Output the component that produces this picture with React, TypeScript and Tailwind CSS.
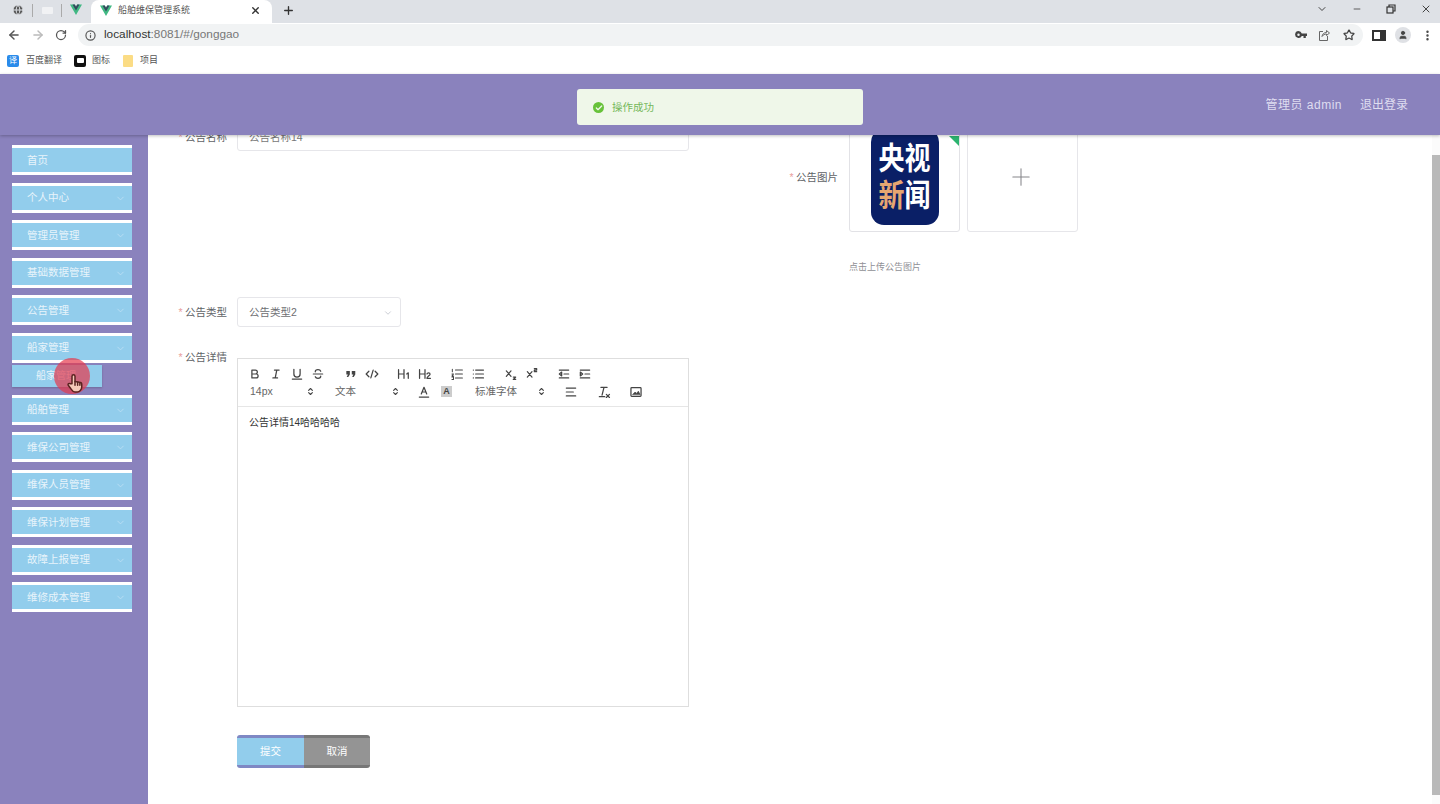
import type { ReactNode } from 'react'
import { ArrowLeft, ArrowRight, Check, ChevronDown, ChevronsUpDown, Info, MoreVertical, Plus, RotateCw, Star, User, X, Minus, Globe } from 'lucide-react'

const cjk = "font-['Liberation_Sans','Noto_Sans_CJK_SC',sans-serif]"

const menus = [
  { name: '首页' },
  { name: '个人中心', arrow: true },
  { name: '管理员管理', arrow: true },
  { name: '基础数据管理', arrow: true },
  { name: '公告管理', arrow: true },
  { name: '船家管理', arrow: true, sub: '船家管理' },
  { name: '船舶管理', arrow: true },
  { name: '维保公司管理', arrow: true },
  { name: '维保人员管理', arrow: true },
  { name: '维保计划管理', arrow: true },
  { name: '故障上报管理', arrow: true },
  { name: '维修成本管理', arrow: true },
]

function VueMark({ size = 12 }: { size?: number }) {
  return (
    <svg width={size} height={size} viewBox="0 0 24 22">
      <path d="M0 0h9.5L12 4.5 14.500 0H24L12 21z" fill="#41b883" />
      <path d="M5 0h4.500L12 4.500 14.500 0H19l-7 12z" fill="#35495e" />
    </svg>
  )
}

function Q({ children, className = '' }: { children: ReactNode; className?: string }) {
  return (
    <svg viewBox="0 0 18 18" className={`size-[14px] ${className}`} fill="none" stroke="#444" strokeWidth="1.600" strokeLinecap="round" strokeLinejoin="round">
      {children}
    </svg>
  )
}

function TBtn({ children }: { children: ReactNode }) {
  return <span className="flex h-[18px] w-[21px] items-center justify-center">{children}</span>
}

function Picker({ label, width }: { label: string; width: string }) {
  return (
    <span className={`flex h-[18px] items-center justify-between pl-[6px] text-[10.500px] text-[#666] ${width}`}>
      {label}
      <ChevronsUpDown className="size-[9px] text-[#444]" strokeWidth={3} />
    </span>
  )
}

function EditorToolbar() {
  return (
    <div className="flex h-[48px] flex-col justify-center border-b border-[#e6e6e6] pl-[6px]">
      <div className="flex h-[18px] items-center">
        <div className="mr-[12px] flex">
          <TBtn><Q><path d="M5 4h4.500a2.500 2.500 0 0 1 0 5H5zM5 9h5.500a2.500 2.500 0 0 1 0 5H5z" /></Q></TBtn>
          <TBtn><Q><path d="M7 4h6M5 14h6M8 14l2-10" /></Q></TBtn>
          <TBtn><Q><path d="M5 3v6a4 4 0 0 0 8 0V3M3 15.500h12" /></Q></TBtn>
          <TBtn><Q><path d="M3 9h12M12.500 5.500C12 4 10.500 3.500 9 3.500c-2 0-3.500 1-3.500 2.700M5.500 12.500c.5 1.500 2 2 3.500 2 2 0 3.500-1 3.500-2.700" /></Q></TBtn>
        </div>
        <div className="mr-[11px] flex">
          <TBtn>
            <svg viewBox="0 0 18 18" className="size-[14px]" fill="#444">
              <path d="M3 5h4.500v4.500L5.500 13H3.500l1.500-3.500H3zM10 5h4.500v4.500L12.500 13h-2l1.500-3.500h-2z" />
            </svg>
          </TBtn>
          <TBtn><Q><path d="M5 5.500 1.500 9 5 12.500M13 5.500 16.500 9 13 12.500M10.500 4l-3 10" /></Q></TBtn>
        </div>
        <div className="mr-[11px] flex">
          <TBtn><Q><path d="M2 3.500v11M9 3.500v11M2 9h7M12.500 9 14.500 7.500v7" /></Q></TBtn>
          <TBtn><Q><path d="M2 3.500v11M9 3.500v11M2 9h7M11.500 9c.5-2 4-2 4 .3 0 1.700-4 3.200-4 5.200h4.500" /></Q></TBtn>
        </div>
        <div className="mr-[12px] flex">
          <TBtn><Q><path d="M7 4h9M7 9h9M7 14h9M3 3v3M2.500 9h2l-2 2.500h2M2.500 13h2v3h-2" strokeWidth="1.300" /></Q></TBtn>
          <TBtn><Q><path d="M6 4h10M6 9h10M6 14h10M3 4h.1M3 9h.1M3 14h.1" /></Q></TBtn>
        </div>
        <div className="mr-[11px] flex">
          <TBtn><Q><path d="M3 5l6 7M9 5l-6 7M12 13h3l-3 3h3" /></Q></TBtn>
          <TBtn><Q><path d="M3 6l6 7M9 6l-6 7M12 2h3v2h-3v2h3" /></Q></TBtn>
        </div>
        <div className="flex">
          <TBtn><Q><path d="M3 4h12M3 14h12M9 9h6M6 6.500 3 9l3 2.500z" /></Q></TBtn>
          <TBtn><Q><path d="M3 4h12M3 14h12M9 9h6M3 6.500 6 9l-3 2.500z" /></Q></TBtn>
        </div>
      </div>
      <div className="flex h-[18px] items-center">
        <Picker label="14px" width="w-[71px]" />
        <span className="w-[14px]" />
        <Picker label="文本" width="w-[71px]" />
        <span className="w-[13px]" />
        <TBtn><Q><path d="M5.500 11.500 9 3l3.500 8.500M6.500 9h5M3 15.500h12" /></Q></TBtn>
        <span className="w-[2px]" />
        <TBtn>
          <span className="flex size-[11px] items-center justify-center bg-[#ccc] text-[9px] font-bold leading-none text-[#444]">A</span>
        </TBtn>
        <span className="w-[12px]" />
        <Picker label="标准字体" width="w-[77px]" />
        <span className="w-[14px]" />
        <TBtn><Q><path d="M3 4h12M3 9h9M3 14h12" /></Q></TBtn>
        <span className="w-[12px]" />
        <TBtn><Q><path d="M5 3h8M9 3l-2.500 10M3 15h7M12 12l4 4M16 12l-4 4" /></Q></TBtn>
        <span className="w-[11px]" />
        <TBtn><Q><rect x="2.500" y="3.500" width="13" height="11" rx="1" /><path d="M5 12l3-3 2 2 2-3 2 4z" fill="#444" strokeWidth="1" /></Q></TBtn>
      </div>
    </div>
  )
}

function FieldLabel({ text, className = '' }: { text: string; className?: string }) {
  return (
    <span className={`pr-px text-right text-[10.500px] leading-[16px] text-[#606266] ${className}`}>
      <span className="mr-[2.500px] text-[#e9a0a0]">*</span>
      {text}
    </span>
  )
}

function LogoCard() {
  return (
    <div className="relative flex size-[111px] items-center justify-center overflow-hidden rounded-[3px] border border-[#e2e2e6] bg-white">
      <div className="grid h-[96px] w-[68px] grid-cols-2 content-center justify-items-center rounded-[13px] bg-[#0a1f66] px-[8px] text-[26px] font-bold leading-[37px] text-white">
        <span className="scale-y-[1.2]">央</span>
        <span className="scale-y-[1.2]">视</span>
        <span className="scale-y-[1.2] text-[#e6a671]">新</span>
        <span className="scale-y-[1.2]">闻</span>
      </div>
      <svg className="absolute right-0 top-[14px]" width="10" height="10"><path d="M0 0h10v10z" fill="#2cb36f" /></svg>
    </div>
  )
}

export default function App() {
  return (
    <div className={`relative flex h-[804px] w-[1440px] flex-col overflow-hidden bg-white ${cjk}`}>
      {/* browser tabs */}
      <div className="flex h-[23px] items-center bg-[#dee1e6]">
        <div className="flex h-full w-[91px] items-center pb-[3px] pl-[12px]">
          <Globe className="size-[12px] fill-[#555] text-[#dee1e6]" strokeWidth={2} />
          <span className="ml-[8px] h-[13px] w-px bg-[#aaa]" />
          <span className="ml-[9px] h-[7px] w-[11px] rounded-[1px] bg-[#f1f2f4]" />
          <span className="ml-[8px] h-[13px] w-px bg-[#aaa]" />
          <span className="ml-[8px]"><VueMark /></span>
        </div>
        <div className="flex h-full w-[181px] items-center rounded-t-[8px] bg-white pb-[2px] pl-[9px] pr-[11px]">
          <VueMark />
          <span className="ml-[6px] flex-1 text-[9px] text-[#555]">船舶维保管理系统</span>
          <X className="size-[11px] text-[#333]" strokeWidth={3} />
        </div>
        <Plus className="mb-[3px] ml-[10px] size-[13px] text-[#333]" strokeWidth={2.500} />
        <div className="mb-[6px] ml-auto flex items-center gap-[24px] pr-[8px] text-[#444]">
          <ChevronDown className="size-[12px]" />
          <Minus className="size-[10px]" />
          <svg width="10" height="10" viewBox="0 0 10 10" fill="none" stroke="#333" strokeWidth="1.200"><rect x="1" y="3" width="6" height="6" /><path d="M3 3V1h6v6H7" /></svg>
          <X className="size-[12px]" />
        </div>
      </div>
      {/* address bar */}
      <div className="flex h-[24px] items-center bg-white pl-[7px] pr-[6.500px]">
        <ArrowLeft className="size-[14px] text-[#555]" strokeWidth={2.500} />
        <ArrowRight className="ml-[10px] size-[14px] text-[#bbb]" strokeWidth={2.500} />
        <RotateCw className="ml-[10px] size-[12px] text-[#555]" strokeWidth={2.500} />
        <div className="ml-[11px] flex h-[22px] flex-1 items-center rounded-full bg-[#f1f3f4] pl-[7px] pr-[8px]">
          <Info className="size-[11px] text-[#555]" strokeWidth={2.500} />
          <span className="ml-[8px] text-[11.800px] text-[#777]"><span className="text-[#333]">localhost</span>:8081/#/gonggao</span>
          <svg className="ml-auto" width="12" height="8" viewBox="0 0 12 8" fill="#444">
            <path d="M3.500 0a3.500 3.500 0 0 1 3.300 2.500H12v2.500h-1.200v2H8.500V5H6.800A3.500 3.500 0 1 1 3.500 0zm0 2.500a1.200 1.200 0 1 0 0 2.500 1.200 1.200 0 0 0 0-2.500z" />
          </svg>
          <svg className="ml-[11px]" width="12" height="12" viewBox="0 0 12 12" fill="none" stroke="#666" strokeWidth="1">
            <path d="M5 2.500H1.500v9h8V7M4 7.500c.3-2.500 2-4 4.500-4V1.500L11.500 4 8.500 6.500V5C6.500 5 5 6 4 7.500z" />
          </svg>
          <Star className="ml-[13px] size-[12px] text-[#444]" strokeWidth={2.500} />
        </div>
        <span className="ml-[9px] h-[11px] w-[14px] border-2 border-r-[6px] border-[#333]" />
        <span className="ml-[9px] flex size-[16px] items-center justify-center rounded-full bg-[#dfe1e5]">
          <User className="size-[10px] fill-[#444] text-[#444]" />
        </span>
        <MoreVertical className="ml-[10px] size-[13px] text-[#444]" strokeWidth={2.500} />
      </div>
      {/* bookmarks */}
      <div className="flex h-[27px] items-center bg-white pl-[7px] text-[9px] text-[#555]">
        <span className="flex size-[12px] items-center justify-center rounded-[2px] bg-[#2a8bea] text-[8px] text-white">译</span>
        <span className="ml-[7px]">百度翻译</span>
        <span className="ml-[12px] flex size-[12px] items-center justify-center rounded-[2px] bg-[#111]"><span className="h-[5px] w-[7px] rounded-[1px] bg-white" /></span>
        <span className="ml-[6px]">图标</span>
        <span className="ml-[13px] h-[12px] w-[10px] rounded-[1px] bg-[#fbdc85]" />
        <span className="ml-[7px]">项目</span>
      </div>

      {/* app header */}
      <header className="relative z-10 flex h-[61px] items-center justify-end gap-[18px] bg-[#8a82bd] pr-[32px] text-[12px] text-[#dfddf0] shadow-[0_1px_3px_rgba(0,0,0,0.25)]">
        <span className="tracking-[0.5px]">管理员 admin</span>
        <span>退出登录</span>
      </header>

      <div className="flex min-h-0 flex-1">
        {/* sidebar */}
        <aside className="flex w-[148px] shrink-0 flex-col bg-[#8a82bd] pl-[12px] pt-[10px]">
          {menus.map(m => (
            <div key={m.name} className="mb-[7.500px]">
              <div className="flex h-[30px] w-[120px] items-center justify-between border-y-[3px] border-white bg-[#92cdec] pl-[15px] pr-[6px] pt-[1px] text-[10.500px] text-[#e8f4fb]">
                <span>{m.name}</span>
                {m.arrow && <ChevronDown className="size-[11px] text-[#b9def3]" />}
              </div>
              {m.sub && (
                <div className="mb-[0.500px] mt-[2px] flex h-[22px] w-[90px] items-center bg-[#92cdec] pl-[24px] text-[10px] text-[#e8f4fb] shadow-[0_1px_2px_rgba(0,0,0,0.2)]">
                  {m.sub}
                </div>
              )}
            </div>
          ))}
        </aside>

        {/* form */}
        <main className="min-w-0 flex-1 overflow-hidden">
          <div className="-mt-[14px]">
            <div className="flex h-[176px]">
              <div className="flex w-[620px]">
                <FieldLabel text="公告名称" className="mt-[8px] w-[80px]" />
                <div className="ml-[9px] h-[30px] w-[452px] rounded-[3px] border border-[#e6e6ea] pl-[11px] pt-[1px] text-[10.500px] leading-[28px] text-[#777]">公告名称14</div>
              </div>
              <FieldLabel text="公告图片" className="mt-[48px] w-[71px]" />
              <div className="ml-[10px]">
                <div className="flex gap-[7px]">
                  <LogoCard />
                  <div className="flex size-[111px] items-center justify-center rounded-[3px] border border-[#e6e6ea] pr-[3px]">
                    <Plus className="size-[28px] text-[#85858a]" strokeWidth={0.900} />
                  </div>
                </div>
                <p className="mt-[28px] text-[9px] leading-[14px] text-[#8f8f95]">点击上传公告图片</p>
              </div>
            </div>
            <div className="flex">
              <FieldLabel text="公告类型" className="mt-[7px] w-[80px]" />
              <div className="ml-[9px] flex h-[30px] w-[164px] items-center justify-between rounded-[3px] border border-[#e6e6ea] pl-[11px] pr-[7px] pt-[1px] text-[10.500px] text-[#6e6e72]">
                公告类型2
                <ChevronDown className="size-[10px] text-[#c0c4cc]" />
              </div>
            </div>
            <div className="mt-[31px] flex">
              <FieldLabel text="公告详情" className="mt-[-9px] w-[80px]" />
              <div className="ml-[9px] h-[349px] w-[452px] border border-[#dedede]">
                <EditorToolbar />
                <p className="pl-[11px] pt-[9px] text-[10px] leading-[14px] text-[#333]">公告详情14哈哈哈哈</p>
              </div>
            </div>
            <div className="ml-[89px] mt-[28px] flex text-[10.500px] text-white">
              <button className="flex h-[33px] w-[67px] items-center justify-center rounded-l-[3px] border-y-[3px] border-[#7f88c4] bg-[#92cdec]">提交</button>
              <button className="flex h-[33px] w-[66px] items-center justify-center rounded-r-[3px] border-y-[3px] border-[#777] bg-[#949494]">取消</button>
            </div>
          </div>
        </main>

        {/* page scrollbar */}
        <div className="flex w-[8px] shrink-0 flex-col bg-[#fbfbfb] pb-[9px] pt-[20px]">
          <div className="flex-1 bg-[#b9b9b9]" />
        </div>
      </div>

      {/* toast */}
      <div className="absolute left-[577px] top-[89px] z-20 flex h-[36px] w-[286px] items-center rounded-[3px] bg-[#eff7e9] pl-[16px] pt-[1px] text-[10.500px] text-[#75b85a]">
        <span className="flex size-[11px] items-center justify-center rounded-full bg-[#67c23a]">
          <Check className="size-[8px] text-[#eff7e9]" strokeWidth={4} />
        </span>
        <span className="ml-[8px]">操作成功</span>
      </div>

      {/* recorded mouse pointer */}
      <div className="absolute left-[54px] top-[358px] z-20 size-[36px] rounded-full bg-[#e5394d]/70" />
      <svg className="absolute left-[66px] top-[373px] z-30" width="18" height="20" viewBox="0 0 24 26" fill="#f6c9b8" stroke="#5a2320" strokeWidth="2" strokeLinejoin="round" strokeLinecap="round">
        <path d="M8 14V4a2 2 0 0 1 4 0v7l6 1a3 3 0 0 1 3 3v3c0 4-3 7-6 7h-3c-3 0-4-2-6-5l-3-4c-1-2 1-3 3-2z" />
        <path d="M12 11v5M15.500 12v4M18.500 12.500V16" />
      </svg>
    </div>
  )
}
